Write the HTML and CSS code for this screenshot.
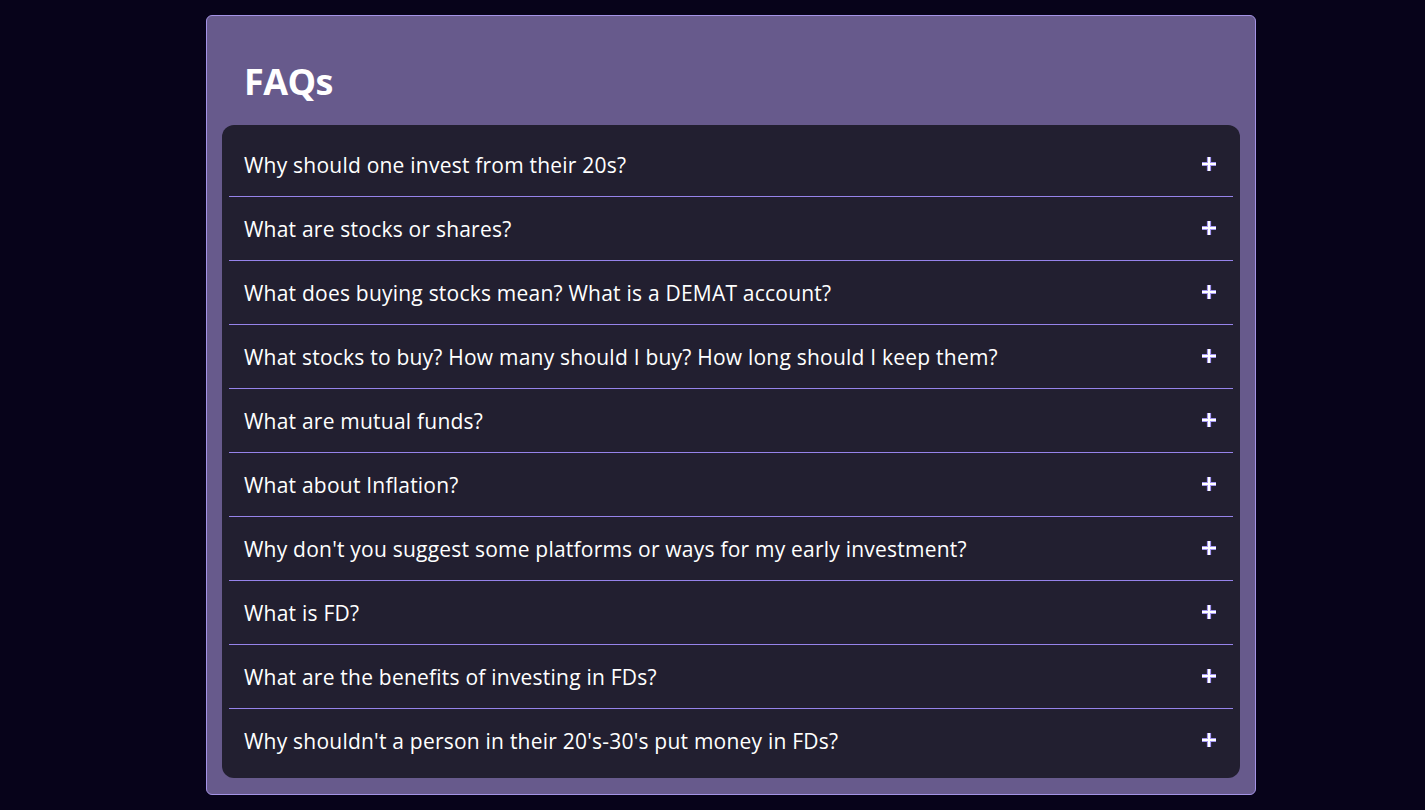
FILE: index.html
```html
<!DOCTYPE html>
<html>
<head>
<meta charset="utf-8">
<link rel="stylesheet" href="styles.css">
</head>
<body>
<section class="faq-card">
  <h1 class="faq-title">FAQs</h1>
  <ul class="faq-list">
    <li class="faq-item"><span>Why should one invest from their 20s?</span><svg class="plus" viewBox="0 0 16 16"><path class="halo" d="M8 1V15M1 8H15"/><path class="core" d="M8 1V15M1 8H15"/></svg></li>
    <li class="faq-item"><span>What are stocks or shares?</span><svg class="plus" viewBox="0 0 16 16"><path class="halo" d="M8 1V15M1 8H15"/><path class="core" d="M8 1V15M1 8H15"/></svg></li>
    <li class="faq-item"><span>What does buying stocks mean? What is a DEMAT account?</span><svg class="plus" viewBox="0 0 16 16"><path class="halo" d="M8 1V15M1 8H15"/><path class="core" d="M8 1V15M1 8H15"/></svg></li>
    <li class="faq-item"><span>What stocks to buy? How many should I buy? How long should I keep them?</span><svg class="plus" viewBox="0 0 16 16"><path class="halo" d="M8 1V15M1 8H15"/><path class="core" d="M8 1V15M1 8H15"/></svg></li>
    <li class="faq-item"><span>What are mutual funds?</span><svg class="plus" viewBox="0 0 16 16"><path class="halo" d="M8 1V15M1 8H15"/><path class="core" d="M8 1V15M1 8H15"/></svg></li>
    <li class="faq-item"><span>What about Inflation?</span><svg class="plus" viewBox="0 0 16 16"><path class="halo" d="M8 1V15M1 8H15"/><path class="core" d="M8 1V15M1 8H15"/></svg></li>
    <li class="faq-item"><span>Why don't you suggest some platforms or ways for my early investment?</span><svg class="plus" viewBox="0 0 16 16"><path class="halo" d="M8 1V15M1 8H15"/><path class="core" d="M8 1V15M1 8H15"/></svg></li>
    <li class="faq-item"><span>What is FD?</span><svg class="plus" viewBox="0 0 16 16"><path class="halo" d="M8 1V15M1 8H15"/><path class="core" d="M8 1V15M1 8H15"/></svg></li>
    <li class="faq-item"><span>What are the benefits of investing in FDs?</span><svg class="plus" viewBox="0 0 16 16"><path class="halo" d="M8 1V15M1 8H15"/><path class="core" d="M8 1V15M1 8H15"/></svg></li>
    <li class="faq-item"><span>Why shouldn't a person in their 20's-30's put money in FDs?</span><svg class="plus" viewBox="0 0 16 16"><path class="halo" d="M8 1V15M1 8H15"/><path class="core" d="M8 1V15M1 8H15"/></svg></li>
  </ul>
</section>
</body>
</html>
```
FILE: styles.css
```css
html, body {
  margin: 0;
  padding: 0;
  background: #07031a;
  height: 100%;
}
body {
  font-family: "Open Sans", "Noto Sans", sans-serif;
  color: #ffffff;
  padding-top: 15px;
  box-sizing: border-box;
}
.faq-card {
  width: 1050px;
  box-sizing: border-box;
  margin-left: 206px;
  background: #675a8c;
  border: 1px solid #a493e6;
  border-radius: 6px;
  padding: 15px 15px 16px 15px;
}
.faq-title {
  margin: 0;
  padding: 29px 0 0 22px;
  height: 94px;
  box-sizing: border-box;
  font-size: 36px;
  line-height: 44px;
  font-weight: 700;
  letter-spacing: -0.6px;
}
.faq-list {
  list-style: none;
  margin: 0;
  background: #221f30;
  border-radius: 12px;
  padding: 8px 7px 5px 7px;
}
.faq-item {
  display: flex;
  align-items: center;
  justify-content: space-between;
  height: 64px;
  box-sizing: border-box;
  padding: 0 15px 0 15px;
  border-bottom: 1px solid #9683ea;
  font-size: 21px;
  letter-spacing: 0.22px;
}
.faq-item:last-child {
  border-bottom: none;
}
.plus {
  width: 16px;
  height: 16px;
  flex: none;
  fill: none;
  position: relative;
  top: -1px;
  left: -1px;
}
.plus .halo {
  stroke: #a395f0;
  stroke-width: 4.2;
}
.plus .core {
  stroke: #ffffff;
  stroke-width: 2;
}
```
